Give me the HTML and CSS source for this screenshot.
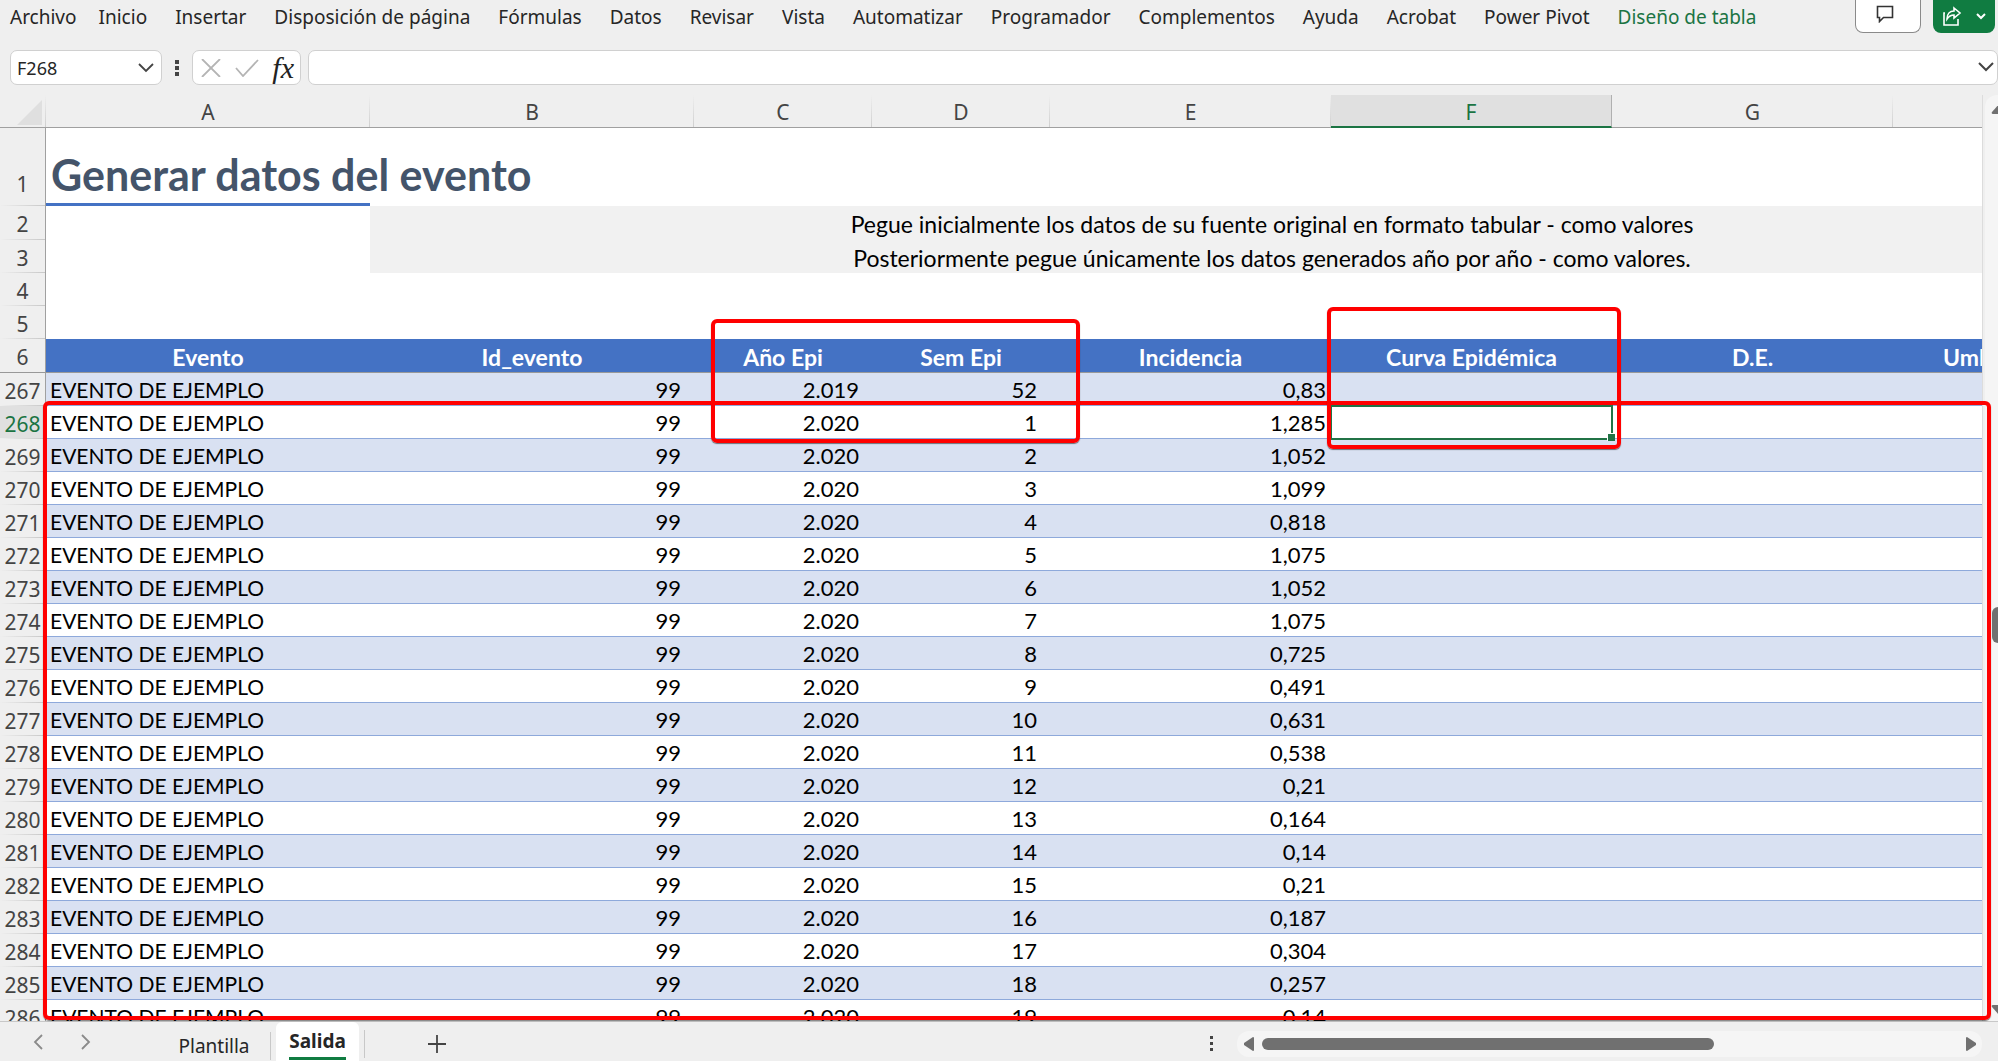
FILE: index.html
```html
<!DOCTYPE html>
<html lang="es">
<head>
<meta charset="utf-8">
<title>Generar datos del evento</title>
<link rel="stylesheet" href="styles.css">
</head>
<body>
<header class="ribbon">
  <nav class="menu" aria-label="Cinta de opciones">
    <a href="#" class="file">Archivo</a><a href="#">Inicio</a><a href="#">Insertar</a><a href="#">Disposición de página</a><a href="#">Fórmulas</a><a href="#">Datos</a><a href="#">Revisar</a><a href="#">Vista</a><a href="#">Automatizar</a><a href="#">Programador</a><a href="#">Complementos</a><a href="#">Ayuda</a><a href="#">Acrobat</a><a href="#">Power Pivot</a><a href="#" class="active">Diseño de tabla</a>
  </nav>
  <div class="actions">
    <button class="comment" type="button" aria-label="Comentarios"><svg width="18" height="18" viewBox="0 0 18 18"><path d="M1.500 1.500h15v11h-9l-4 4v-4h-2z" fill="none" stroke="#333" stroke-width="1.600"/></svg></button>
    <button class="share" type="button" aria-label="Compartir"><svg width="20" height="20" viewBox="0 0 20 20" fill="none" stroke="#fff" stroke-width="1.600"><path d="M3 7H2v12h14v-6"/><path d="M12 2l6 5-6 5V9C9 9 7 10 5 13c0-5 3-8 7-8z"/></svg><svg width="10" height="8" viewBox="0 0 10 8"><path d="M1 2l4 4 4-4" fill="none" stroke="#fff" stroke-width="2"/></svg></button>
  </div>
</header>

<div class="formula-bar">
  <div class="name-box"><input type="text" value="F268" aria-label="Cuadro de nombres"><svg width="16" height="10" viewBox="0 0 16 10"><path d="M1 1l7 7 7-7" fill="none" stroke="#444" stroke-width="1.800"/></svg></div>
  <svg class="dots" width="4" height="16" viewBox="0 0 4 16" fill="#444"><path d="M0 0h4v4H0zM0 6h4v4H0zM0 12h4v4H0z"/></svg>
  <div class="fx-box">
    <button type="button" aria-label="Cancelar"><svg width="20" height="18" viewBox="0 0 20 18"><path d="M1 0l18 18M19 0L1 18" stroke="#b4b4b4" stroke-width="1.800"/></svg></button>
    <button type="button" aria-label="Introducir"><svg width="24" height="18" viewBox="0 0 24 18"><path d="M1 9l7 8L23 1" fill="none" stroke="#b4b4b4" stroke-width="1.800"/></svg></button>
    <button type="button" class="fx" aria-label="Insertar función">fx</button>
  </div>
  <div class="formula"><input type="text" aria-label="Barra de fórmulas"><svg width="16" height="10" viewBox="0 0 16 10"><path d="M1 1l7 7 7-7" fill="none" stroke="#444" stroke-width="2"/></svg></div>
</div>

<main class="workspace">
  <div class="sheet">
    <table>
      <colgroup><col class="w-num"><col class="w-a"><col class="w-a"><col class="w-c"><col class="w-c"><col class="w-e"><col class="w-e"><col class="w-e"><col class="w-e"></colgroup>
      <thead>
        <tr class="letters"><th class="corner"><svg width="25" height="25" viewBox="0 0 25 25"><path d="M25 0v25H0z" fill="#dfdfdf"/></svg></th><th>A</th><th>B</th><th>C</th><th>D</th><th>E</th><th class="current">F</th><th>G</th><th></th></tr>
      </thead>
      <tbody>
        <tr class="title-row"><th>1</th><td class="title-line">Generar datos del evento</td><td colspan="7"></td></tr>
        <tr class="note first"><th>2</th><td></td><td colspan="7" class="fill">Pegue inicialmente los datos de su fuente original en formato tabular - como valores</td></tr>
        <tr class="note"><th>3</th><td></td><td colspan="7" class="fill">Posteriormente pegue únicamente los datos generados año por año - como valores.</td></tr>
        <tr><th>4</th><td colspan="8"></td></tr>
        <tr><th>5</th><td colspan="8"></td></tr>
        <tr class="fields"><th>6</th><td>Evento</td><td>Id_evento</td><td>Año Epi</td><td>Sem Epi</td><td>Incidencia</td><td>Curva Epidémica</td><td>D.E.</td><td class="cut">Umbral</td></tr>
      </tbody>
      <tbody class="data">
        <tr><th>267</th><td>EVENTO DE EJEMPLO</td><td>99</td><td>2.019</td><td>52</td><td>0,83</td><td></td><td></td><td></td></tr>
        <tr class="current-row"><th>268</th><td>EVENTO DE EJEMPLO</td><td>99</td><td>2.020</td><td>1</td><td>1,285</td><td class="selected"></td><td></td><td></td></tr>
        <tr><th>269</th><td>EVENTO DE EJEMPLO</td><td>99</td><td>2.020</td><td>2</td><td>1,052</td><td></td><td></td><td></td></tr>
        <tr><th>270</th><td>EVENTO DE EJEMPLO</td><td>99</td><td>2.020</td><td>3</td><td>1,099</td><td></td><td></td><td></td></tr>
        <tr><th>271</th><td>EVENTO DE EJEMPLO</td><td>99</td><td>2.020</td><td>4</td><td>0,818</td><td></td><td></td><td></td></tr>
        <tr><th>272</th><td>EVENTO DE EJEMPLO</td><td>99</td><td>2.020</td><td>5</td><td>1,075</td><td></td><td></td><td></td></tr>
        <tr><th>273</th><td>EVENTO DE EJEMPLO</td><td>99</td><td>2.020</td><td>6</td><td>1,052</td><td></td><td></td><td></td></tr>
        <tr><th>274</th><td>EVENTO DE EJEMPLO</td><td>99</td><td>2.020</td><td>7</td><td>1,075</td><td></td><td></td><td></td></tr>
        <tr><th>275</th><td>EVENTO DE EJEMPLO</td><td>99</td><td>2.020</td><td>8</td><td>0,725</td><td></td><td></td><td></td></tr>
        <tr><th>276</th><td>EVENTO DE EJEMPLO</td><td>99</td><td>2.020</td><td>9</td><td>0,491</td><td></td><td></td><td></td></tr>
        <tr><th>277</th><td>EVENTO DE EJEMPLO</td><td>99</td><td>2.020</td><td>10</td><td>0,631</td><td></td><td></td><td></td></tr>
        <tr><th>278</th><td>EVENTO DE EJEMPLO</td><td>99</td><td>2.020</td><td>11</td><td>0,538</td><td></td><td></td><td></td></tr>
        <tr><th>279</th><td>EVENTO DE EJEMPLO</td><td>99</td><td>2.020</td><td>12</td><td>0,21</td><td></td><td></td><td></td></tr>
        <tr><th>280</th><td>EVENTO DE EJEMPLO</td><td>99</td><td>2.020</td><td>13</td><td>0,164</td><td></td><td></td><td></td></tr>
        <tr><th>281</th><td>EVENTO DE EJEMPLO</td><td>99</td><td>2.020</td><td>14</td><td>0,14</td><td></td><td></td><td></td></tr>
        <tr><th>282</th><td>EVENTO DE EJEMPLO</td><td>99</td><td>2.020</td><td>15</td><td>0,21</td><td></td><td></td><td></td></tr>
        <tr><th>283</th><td>EVENTO DE EJEMPLO</td><td>99</td><td>2.020</td><td>16</td><td>0,187</td><td></td><td></td><td></td></tr>
        <tr><th>284</th><td>EVENTO DE EJEMPLO</td><td>99</td><td>2.020</td><td>17</td><td>0,304</td><td></td><td></td><td></td></tr>
        <tr><th>285</th><td>EVENTO DE EJEMPLO</td><td>99</td><td>2.020</td><td>18</td><td>0,257</td><td></td><td></td><td></td></tr>
        <tr><th>286</th><td>EVENTO DE EJEMPLO</td><td>99</td><td>2.020</td><td>19</td><td>0,14</td><td></td><td></td><td></td></tr>
      </tbody>
    </table>
  </div>
  <div class="vscroll">
    <svg width="18" height="12" viewBox="0 0 18 12"><path d="M9 0l8 9q1 2-1 2H2q-2 0-1-2z" fill="#707070"/></svg>
    <div class="vthumb"></div>
    <svg width="18" height="12" viewBox="0 0 18 12"><path d="M9 12L1 3Q0 1 2 1h14q2 0 1 2z" fill="#707070"/></svg>
  </div>
  <div class="mark mark-rows"></div>
  <div class="mark mark-weeks"></div>
  <div class="mark mark-curve"></div>
</main>

<footer class="tabs-bar">
  <div class="arrows">
    <button type="button" aria-label="Hoja anterior"><svg width="10" height="16" viewBox="0 0 10 16"><path d="M9 1L2 8l7 7" fill="none" stroke="#8a8a8a" stroke-width="1.800"/></svg></button>
    <button type="button" aria-label="Hoja siguiente"><svg width="10" height="16" viewBox="0 0 10 16"><path d="M1 1l7 7-7 7" fill="none" stroke="#8a8a8a" stroke-width="1.800"/></svg></button>
  </div>
  <button type="button" class="tab">Plantilla</button>
  <button type="button" class="tab on"><span>Salida</span></button>
  <button type="button" class="add" aria-label="Hoja nueva"><svg width="18" height="18" viewBox="0 0 18 18"><path d="M9 0v18M0 9h18" stroke="#444" stroke-width="1.800"/></svg></button>
  <svg class="grip" width="3" height="16" viewBox="0 0 3 16" fill="#444"><path d="M0 0h3v3H0zM0 6h3v3H0zM0 12h3v3H0z"/></svg>
  <div class="hscroll">
    <svg width="10" height="14" viewBox="0 0 10 14"><path d="M10 1v12q0 1-1 1L0 8V6l9-6q1 0 1 1z" fill="#707070"/></svg>
    <div class="htrack"><div class="hthumb"></div></div>
    <svg width="10" height="14" viewBox="0 0 10 14"><path d="M0 1v12q0 1 1 1l9-6V6L1 0Q0 0 0 1z" fill="#707070"/></svg>
  </div>
</footer>
</body>
</html>
```
FILE: styles.css
```css
* { box-sizing: border-box; }
body {
  margin: 0;
  height: 100vh;
  display: flex;
  flex-direction: column;
  overflow: hidden;
  background: #efefef;
  color: #262626;
  font-family: "Noto Sans", "Open Sans", sans-serif;
  font-size: 19px;
}
button, input { font: inherit; color: inherit; border: 0; background: none; padding: 0; outline: 0; }
svg { display: block; flex: none; }

/* Ribbon */
.ribbon { display: flex; justify-content: space-between; height: 50px; flex: none; padding: 0 3px 0 10px; }
.menu { display: flex; gap: 28px; line-height: 34px; white-space: nowrap; }
.menu a { color: inherit; text-decoration: none; }
.menu .file { margin-right: -6px; }
.menu .active { color: #1b7443; }
.actions { display: flex; gap: 12px; height: 33px; }
.actions button { display: flex; align-items: center; justify-content: center; border-radius: 0 0 8px 8px; }
.comment { width: 66px; background: #fff; border: 1px solid #8a8a8a; border-top: 0; padding-right: 6px; padding-bottom: 4px; }
.share { width: 62px; background: #107c41; gap: 14px; padding-bottom: 2px; }

/* Formula bar */
.formula-bar { display: flex; align-items: center; height: 35px; flex: none; padding-left: 10px; margin-bottom: 10px; }
.name-box, .fx-box, .formula { display: flex; align-items: center; height: 35px; background: #fff; border: 1px solid #d0d0d0; border-radius: 7px; }
.name-box { width: 152px; padding: 0 7px 0 6px; font-size: 18px; }
.name-box input { flex: 1; min-width: 0; }
.dots { margin: 0 13px; }
.fx-box { width: 109px; justify-content: space-between; padding: 0 6px 0 8px; margin-right: 7px; }
.fx { font: italic 30px/30px "Liberation Serif", serif; color: #222; }
.formula { flex: 1; padding: 0 3px 2px 8px; }
.formula input { flex: 1; }

/* Sheet */
.workspace { position: relative; flex: 1; min-height: 0; display: flex; }
.sheet { flex: 1; min-width: 0; overflow: hidden; background: #fff; border-right: 1px solid #dcdcdc; }
table { width: 2174px; table-layout: fixed; border-collapse: separate; border-spacing: 0; }
.w-num { width: 46px; }
.w-a { width: 324px; }
.w-c { width: 178px; }
.w-e { width: 281px; }
th, td { height: 33px; padding: 2px 0 0; line-height: 28px; white-space: nowrap; }
td { font-family: Lato, Carlito, sans-serif; font-size: 22px; color: #000; }
th {
  font-size: 21px; font-weight: 400; color: #444;
  border-right: 1px solid #a0a0a0;
  background: linear-gradient(90deg, #efefef, #c8c8c8) bottom / 100% 1px no-repeat #efefef;
}
.letters th { border-right: 0; border-bottom: 1px solid #a0a0a0; background: linear-gradient(#efefef, #cfcfcf) right / 1px 100% no-repeat #efefef; }
.letters .corner svg { margin: 0 4px 0 auto; }
.letters .current { background: #e0e0e0; color: #1b7443; border-bottom: 2px solid #1b7443; border-right: 1px solid #b0b0b0; }
.title-row > * { height: 78px; vertical-align: bottom; }
.title-row th { padding-bottom: 8px; }
.title-row .title-line { max-width: 0; padding-left: 5px; font-size: 43px; font-weight: 700; line-height: 56px; color: #44546a; border-bottom: 3px solid #4472c4; }
.first > * { height: 34px; }
.note .fill { background: #f1f1f1; text-align: center; font-size: 23px; }
.fields td { background: #4472c4; color: #fff; font-size: 23px; font-weight: 700; text-align: center; border-bottom: 1px solid #999; }
.fields th { background: #efefef; border-bottom: 1px solid #999; }
.fields > * { height: 34px; }
.fields .cut { text-align: left; padding-left: 50px; }
.data td { border-bottom: 1px solid #8ea9db; text-align: right; padding-right: 13px; }
.data tr:nth-child(odd) td { background: #d9e1f2; }
.data td:nth-child(2) { text-align: left; padding: 2px 0 0 4px; font-size: 21px; }
.data td:nth-child(6) { padding-right: 5px; }
.current-row th { background-color: #e0e0e0; color: #1b7443; }
.data .selected { position: relative; outline: 2px solid #217346; outline-offset: -1px; }
.selected::after { content: ""; position: absolute; right: -3px; bottom: -3px; width: 7px; height: 7px; background: #217346; border: solid #fff; border-width: 1px 0 0 1px; }

.vscroll { width: 15px; flex: none; margin-left: 2px; margin-right: -2px; background: #f5f5f5; border-radius: 12px 0 0 0; overflow: hidden; display: flex; flex-direction: column; align-items: flex-start; justify-content: space-between; padding: 8px 0 5px 6px; }
.vthumb { width: 14px; height: 36px; border-radius: 6px; background: #707070; margin-left: 1px; margin-top: 130px; }

/* Red annotations over the grid */
.mark { position: absolute; border: 4px solid #f00; border-radius: 6px; box-shadow: 0 1px 1px rgba(0, 0, 0, .5); pointer-events: none; }
.mark-rows { left: 43px; right: 7px; top: 306px; bottom: 1px; }
.mark-weeks { left: 711px; top: 224px; width: 369px; height: 124px; }
.mark-curve { left: 1327px; top: 212px; width: 294px; height: 142px; }

/* Sheet tabs */
.tabs-bar { display: flex; align-items: center; height: 40px; flex: none; border-top: 1px solid #c8c8c8; padding-right: 16px; }
.arrows { display: flex; gap: 38px; width: 166px; padding-left: 33px; }
.tab { height: 28px; margin-top: 8px; line-height: 28px; width: 105px; border-right: 1px solid #c8c8c8; padding-right: 8px; }
.tab.on { height: 40px; width: 83px; margin: 0 5px; padding: 4px 0 0; background: #fff; border: 0; border-radius: 6px 6px 0 0; font-weight: 700; }
.tab span { display: inline-block; height: 33px; border-bottom: 3px solid #107c41; }
.add { width: 144px; height: 28px; margin-top: 4px; display: flex; align-items: center; justify-content: center; border-left: 1px solid #c8c8c8; }
.grip { margin-left: auto; margin-top: 4px; }
.hscroll { display: flex; align-items: center; width: 745px; height: 26px; margin-left: 24px; margin-top: 4px; padding: 0 6px 0 7px; gap: 8px; border-radius: 12px; background: #f5f5f5; }
.htrack { flex: 1; }
.hthumb { width: 65%; height: 12px; border-radius: 6px; background: #707070; }
```
